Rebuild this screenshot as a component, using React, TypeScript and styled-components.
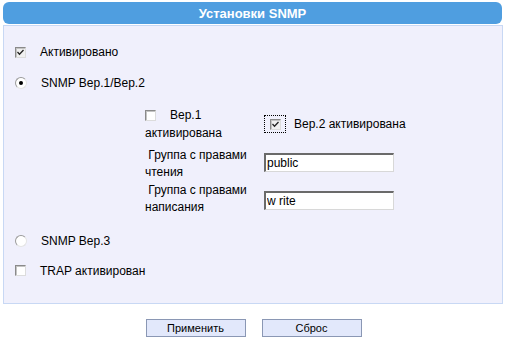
import React from "react";
import styled, { createGlobalStyle } from "styled-components";

const Global = createGlobalStyle`
  html, body { margin: 0; padding: 0; background: #ffffff; }
  body { font-family: "Liberation Sans", Arial, sans-serif; font-size: 12px; color: #000; }
`;

const Page = styled.div`
  width: 509px;
  padding: 2px 0 0 3px;
  box-sizing: border-box;
`;

const Header = styled.div`
  width: 499px;
  height: 22px;
  background: #4f9ee0;
  border-radius: 6px;
  color: #fff;
  font-weight: bold;
  font-size: 13px;
  display: flex;
  align-items: center;
  justify-content: center;
`;

const Panel = styled.div`
  margin-top: 1px;
  width: 500px;
  height: 279px;
  box-sizing: border-box;
  background: #f0f0fc;
  border: 1px solid #c8d8f4;
  padding: 11px 0 0 11px;
  display: flex;
  flex-direction: column;
`;

const Row = styled.div<{ $h?: number }>`
  height: ${(p) => p.$h ?? 30}px;
  display: flex;
  align-items: center;
  gap: 14px;
`;

const Box = styled.span<{ $checked?: boolean }>`
  width: 11px;
  height: 11px;
  box-sizing: border-box;
  border-top: 1px solid #8a8a8a;
  border-left: 1px solid #8a8a8a;
  border-right: 1px solid #dcdcdc;
  border-bottom: 1px solid #dcdcdc;
  background: ${(p) => (p.$checked ? "#f0f0f0" : "#ffffff")};
  box-shadow: inset 1px 1px 0 #c4c4c4;
  display: inline-flex;
  align-items: center;
  justify-content: center;
  flex: none;
`;

const Focus = styled.span`
  display: inline-flex;
  align-items: center;
  justify-content: center;
  width: 22px;
  height: 18px;
  box-sizing: border-box;
  border: 1px dotted #000;
  flex: none;
`;

const Radio = styled.span<{ $on?: boolean }>`
  width: 12px;
  height: 12px;
  border-radius: 50%;
  box-sizing: border-box;
  border: 1px solid #9a9a9a;
  border-right-color: #e4e4e4;
  border-bottom-color: #e4e4e4;
  background: #fff;
  display: inline-flex;
  align-items: center;
  justify-content: center;
  flex: none;
  &::after {
    content: "";
    width: 4px;
    height: 4px;
    border-radius: 50%;
    background: ${(p) => (p.$on ? "#000" : "transparent")};
  }
`;

const Check = ({ checked }: { checked?: boolean }) => (
  <Box $checked={checked}>
    {checked && (
      <svg width="7" height="7" viewBox="0 0 7 7">
        <path d="M0.5 3 L2.5 5.2 L6.5 1" stroke="#222" strokeWidth="1.3" fill="none" />
      </svg>
    )}
  </Box>
);

const Sub = styled.div`
  margin: 8px 0 6px 130px;
  display: grid;
  grid-template-columns: 119px 130px;
  line-height: 16px;
`;

const Cell = styled.div<{ $h: number; $pt?: number }>`
  height: ${(p) => p.$h}px;
  padding-top: ${(p) => p.$pt ?? 0}px;
  box-sizing: border-box;
  line-height: 17px;
`;

const CheckLabel = styled.span`
  display: inline-flex;
  align-items: center;
  gap: 14px;
  vertical-align: -1px;
`;

const InlineCell = styled.div<{ $h: number; $pt?: number }>`
  height: ${(p) => p.$h}px;
  padding-top: ${(p) => p.$pt ?? 0}px;
  box-sizing: border-box;
  display: flex;
  align-items: flex-start;
  gap: 8px;
  white-space: nowrap;
`;

const InlineText = styled.span`
  line-height: 18px;
`;

const Field = styled.input`
  width: 130px;
  height: 19px;
  box-sizing: border-box;
  border-top: 2px solid #6a6a6a;
  border-left: 2px solid #6a6a6a;
  border-right: 1px solid #d8d8d8;
  border-bottom: 1px solid #d8d8d8;
  background: #fff;
  padding: 0 1px;
  font-family: "Liberation Sans", Arial, sans-serif;
  font-size: 12px;
  color: #000;
  outline: none;
`;

const Buttons = styled.div`
  display: flex;
  justify-content: center;
  gap: 16px;
  margin-top: 15px;
  width: 509px;
  margin-left: -3px;
  padding-right: 2px;
  box-sizing: border-box;
`;

const Button = styled.button`
  width: 100px;
  height: 18px;
  box-sizing: border-box;
  background: #e2e8fb;
  border: 1px solid #8a97b4;
  font-family: "Liberation Sans", Arial, sans-serif;
  font-size: 11px;
  color: #000;
  padding: 0;
  display: flex;
  align-items: center;
  justify-content: center;
`;

export default function App() {
  return (
    <Page>
      <Global />
      <Header>Установки SNMP</Header>
      <Panel>
        <Row $h={30}>
          <Check checked />
          <span>Активировано</span>
        </Row>
        <Row $h={32}>
          <Radio $on />
          <span>SNMP Вер.1/Вер.2</span>
        </Row>
        <Sub>
          <Cell $h={40}>
            <CheckLabel>
              <Check />
              <span>Вер.1</span>
            </CheckLabel>{" "}
            активирована
          </Cell>
          <InlineCell $h={40} $pt={8}>
            <Focus>
              <Check checked />
            </Focus>
            <InlineText>Вер.2 активирована</InlineText>
          </InlineCell>
          <Cell $h={35}>{"\u00a0"}Группа с правами чтения</Cell>
          <InlineCell $h={35} $pt={6}>
            <Field defaultValue="public" />
          </InlineCell>
          <Cell $h={38}>{"\u00a0"}Группа с правами написания</Cell>
          <InlineCell $h={38} $pt={9}>
            <Field defaultValue="w rite" />
          </InlineCell>
        </Sub>
        <Row $h={30}>
          <Radio />
          <span>SNMP Вер.3</span>
        </Row>
        <Row $h={29}>
          <Check />
          <span>TRAP активирован</span>
        </Row>
      </Panel>
      <Buttons>
        <Button>Применить</Button>
        <Button>Сброс</Button>
      </Buttons>
    </Page>
  );
}
